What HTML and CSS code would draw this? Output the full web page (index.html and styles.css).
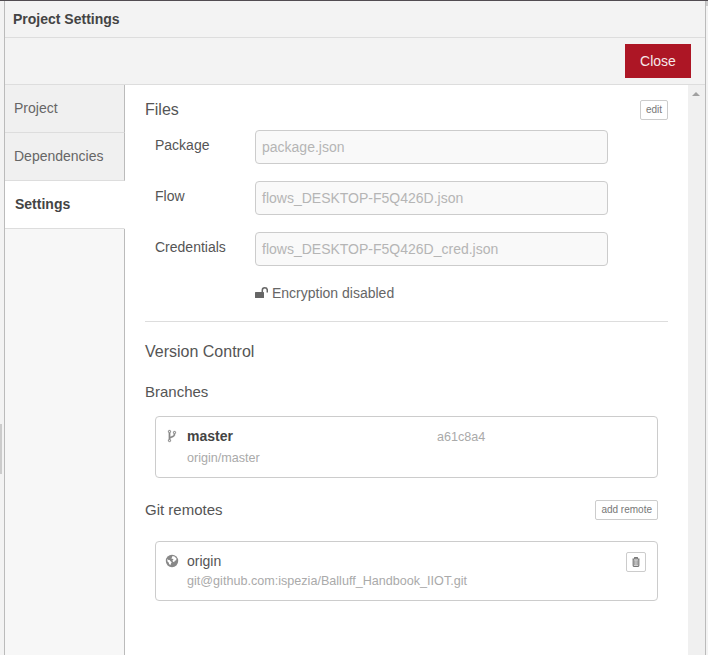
FILE: index.html
```html
<!DOCTYPE html>
<html lang="en">
<head>
<meta charset="utf-8">
<title>Project Settings</title>
<link rel="stylesheet" href="styles.css">
</head>
<body>
<div class="edge-left"><div class="grip"></div></div>
<main class="dialog">
  <header class="title">Project Settings</header>
  <div class="toolbar"><button class="close">Close</button></div>
  <div class="body">
    <nav class="tabs">
      <a class="tab">Project</a>
      <a class="tab">Dependencies</a>
      <a class="tab active">Settings</a>
      <div class="tabs-rest"></div>
    </nav>
    <section class="content">
      <div class="heading files"><h3>Files</h3><button class="small">edit</button></div>
      <div class="row"><label>Package</label><div class="field">package.json</div></div>
      <div class="row"><label>Flow</label><div class="field">flows_DESKTOP-F5Q426D.json</div></div>
      <div class="row"><label>Credentials</label><div class="field">flows_DESKTOP-F5Q426D_cred.json</div></div>
      <div class="encryption">
        <svg class="lock" viewBox="0 0 13 12"><rect x="0" y="5" width="9" height="6" rx=".5" fill="currentColor"/><path d="M7.300 5.500V3.300a2.500 2.500 0 0 1 5 0v2.200" fill="none" stroke="currentColor" stroke-width="1.500"/></svg>
        <span>Encryption disabled</span>
      </div>
      <h3 class="version">Version Control</h3>
      <h4>Branches</h4>
      <div class="box branch">
        <svg class="icon fork" viewBox="0 0 1024 1792"><path fill="currentColor" stroke="currentColor" stroke-width="30" d="M288 1472q0-40-28-68t-68-28-68 28-28 68 28 68 68 28 68-28 28-68zm0-1152q0-40-28-68t-68-28-68 28-28 68 28 68 68 28 68-28 28-68zm640 128q0-40-28-68t-68-28-68 28-28 68 28 68 68 28 68-28 28-68zm96 0q0 52-26 96.500t-70 69.500q-2 287-226 414-67 38-203 81-128 40-169.500 71t-41.500 100v26q44 25 70 69.500t26 96.500q0 80-56 136t-136 56-136-56-56-136q0-52 26-96.500t70-69.500v-820q-44-25-70-69.500t-26-96.500q0-80 56-136t136-56 136 56 56 136q0 52-26 96.500t-70 69.500v497q54-26 154-57 55-17 87.500-29.500t70.500-31 59-39.500 40.500-51 28-69.500 8.500-91.500q-44-25-70-69.500t-26-96.500q0-80 56-136t136-56 136 56 56 136z"/></svg>
        <div class="info"><strong>master</strong><small>origin/master</small></div>
        <span class="hash">a61c8a4</span>
      </div>
      <div class="heading remotes"><h4>Git remotes</h4><button class="small">add remote</button></div>
      <div class="box remote">
        <svg class="icon globe" viewBox="0 0 14 14"><circle cx="7" cy="7" r="6.200" fill="currentColor"/><path fill="#fff" d="M7.500 2.100 9.500 2.500l2 2-.3 1.700-1.400.5-.7 1.600-1.300-.8-.3-1.200 1.100-.9-1-.7-1 .3.100-1.100zM2.200 5l1.300.9 1.100.2.900 1.200 1.200.9-.7 1.300-.7 1.700-1.200-1.100-.4-1.500-1.200-1.100z"/></svg>
        <div class="info"><span>origin</span><small>git@github.com:ispezia/Balluff_Handbook_IIOT.git</small></div>
        <button class="small trash" aria-label="Delete"><svg viewBox="0 0 8 10"><path d="M.5 2h7M2.700 1.800V.7h2.600v1.100M1.200 2.300v6.200q0 .8.7.8h4.200q.7 0 .7-.8V2.300" fill="none" stroke="currentColor" stroke-width="1.200"/><path d="M2.700 3.200v5M4 3.200v5M5.300 3.200v5" stroke="currentColor" stroke-width=".8"/></svg></button>
      </div>
    </section>
    <div class="scrollbar"><div class="arrow"></div></div>
  </div>
</main>
<div class="edge-right"></div>
</body>
</html>
```
FILE: styles.css
```css
* { box-sizing: border-box; }
body {
  margin: 0;
  height: 655px;
  display: flex;
  overflow: hidden;
  border-top: 1px solid #514c51;
  background: #f3f3f3;
  color: #555;
  font: 14px/20px "Liberation Sans", Arial, sans-serif;
}
button { font-family: inherit; margin: 0; }
h3, h4 { margin: 0; font-weight: 400; line-height: 20px; }
h3 { font-size: 16px; }
h4 { font-size: 15px; }
.edge-left { width: 4px; padding-top: 423px; }
.grip { width: 2px; height: 50px; background: #ccc; }
.edge-right { width: 2px; height: 5px; background: #ccc; }
.dialog {
  width: 702px;
  display: flex;
  flex-direction: column;
  border: solid #bbb;
  border-width: 0 1px;
}
.title {
  height: 37px;
  padding: 8px;
  border-bottom: 1px solid #ddd;
  color: #444;
  font-weight: 700;
}
.toolbar {
  height: 47px;
  padding: 6px 14px;
  display: flex;
  justify-content: flex-end;
  border-bottom: 1px solid #ddd;
}
.close {
  width: 66px;
  height: 34px;
  padding: 0;
  border: 0;
  background: #ad1625;
  color: #f5e8ea;
  font-size: 14px;
}
.body { flex: 1; display: flex; min-height: 0; }
.tabs { width: 120px; display: flex; flex-direction: column; }
.tab {
  height: 48px;
  padding: 13px 9px;
  border-right: 1px solid #bbb;
  border-bottom: 1px solid #ddd;
  background: #f0f0f0;
  color: #666;
}
.tab.active { padding-left: 10px; border-right-color: #fff; background: #fff; color: #444; font-weight: 700; }
.tabs-rest { flex: 1; background: #f7f7f7; border-right: 1px solid #bbb; }
.content { width: 563px; padding: 15px 20px 0; background: #fff; }
.scrollbar { width: 17px; padding: 7px 4px; background: #f0f0f0; }
.arrow { width: 8px; border: solid transparent; border-width: 0 4px 4px; border-bottom-color: #a0a0a0; }
.heading { display: flex; justify-content: space-between; }
.files { height: 30px; }
.small {
  height: 20px;
  padding: 0 5px;
  border: 1px solid #ccc;
  border-radius: 2px;
  background: #fff;
  color: #777;
  font-size: 10px;
  line-height: 18px;
}
.row { display: flex; height: 34px; margin-bottom: 17px; padding-left: 10px; }
.row label { width: 100px; padding-top: 5px; }
.field {
  width: 353px;
  padding: 6px;
  border: 1px solid #ccc;
  border-radius: 4px;
  background: #f9f9f9;
  color: #b5b5b5;
}
.encryption {
  height: 39px;
  padding-left: 110px;
  display: flex;
  gap: 4px;
  border-bottom: 1px solid #ddd;
  color: #666;
}
.lock { width: 13px; height: 12px; margin-top: 4px; }
.version { margin: 20px 0; }
.box {
  display: flex;
  margin: 0 10px;
  padding: 9px 11px;
  border: 1px solid #ccc;
  border-radius: 4px;
}
.branch { height: 62px; margin-top: 14px; }
.icon { flex: none; color: #888; }
.fork { width: 12px; height: 14px; margin: 3px 9px 0 -1px; }
.globe { width: 14px; height: 14px; margin: 3px 8px 0 -2px; }
.info { width: 250px; display: flex; flex-direction: column; }
.info strong { color: #444; }
.info small, .hash { font-size: 12.600px; color: #aaa; line-height: 20px; white-space: nowrap; }
.hash { padding-top: 1px; }
.branch small { margin-top: 2px; }
.remotes { margin-top: 22px; padding-right: 10px; }
.remote { height: 60px; margin-top: 21px; }
.remote .info { flex: 1; }
.trash { width: 20px; margin-top: 1px; padding: 0; display: flex; align-items: center; justify-content: center; }
.trash svg { width: 8px; height: 10px; }
```
